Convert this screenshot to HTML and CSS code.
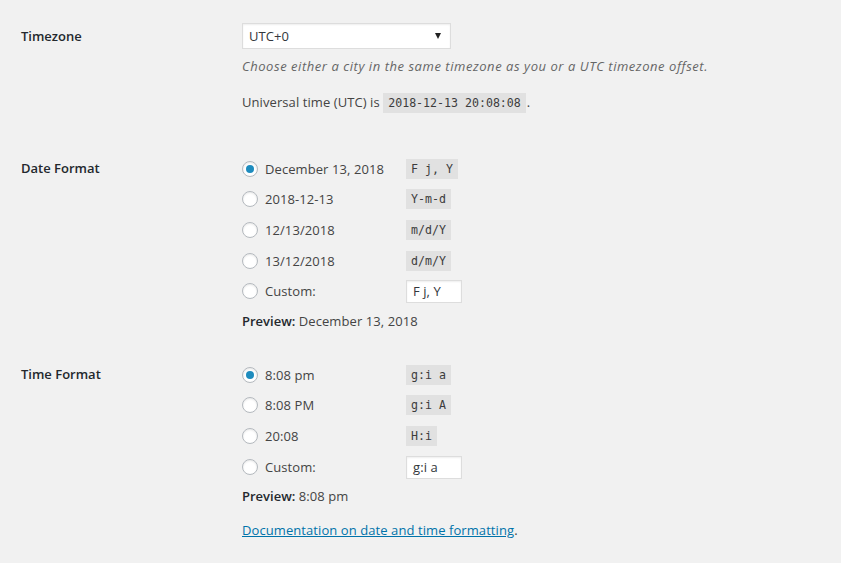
FILE: index.html
```html
<!DOCTYPE html>
<html>
<head>
<meta charset="utf-8">
<link rel="stylesheet" href="styles.css">
</head>
<body>
<div class="form">
  <div class="row row-tz">
    <div class="th th-tz">Timezone</div>
    <div class="td">
      <div class="select"><span>UTC+0</span><span class="arrow"></span></div>
      <p class="description">Choose either a city in the same timezone as you or a UTC timezone offset.</p>
      <p class="utc">Universal time (UTC) is <code>2018-12-13 20:08:08</code>.</p>
    </div>
  </div>

  <div class="row row-date">
    <div class="th th-opt">Date Format</div>
    <div class="td">
      <div class="opt"><span class="radio checked"></span><span class="otext">December 13, 2018</span><code>F j, Y</code></div>
      <div class="opt"><span class="radio"></span><span class="otext">2018-12-13</span><code>Y-m-d</code></div>
      <div class="opt"><span class="radio"></span><span class="otext">12/13/2018</span><code>m/d/Y</code></div>
      <div class="opt"><span class="radio"></span><span class="otext">13/12/2018</span><code>d/m/Y</code></div>
      <div class="opt"><span class="radio"></span><span class="otext">Custom:</span><span class="input">F j, Y</span></div>
      <p class="preview"><strong>Preview:</strong> December 13, 2018</p>
    </div>
  </div>

  <div class="row row-time">
    <div class="th th-opt th-time">Time Format</div>
    <div class="td">
      <div class="opt opt-t"><span class="radio checked"></span><span class="otext">8:08 pm</span><code>g:i a</code></div>
      <div class="opt opt-t"><span class="radio"></span><span class="otext">8:08 PM</span><code>g:i A</code></div>
      <div class="opt opt-t"><span class="radio"></span><span class="otext">20:08</span><code>H:i</code></div>
      <div class="opt opt-t"><span class="radio"></span><span class="otext">Custom:</span><span class="input">g:i a</span></div>
      <p class="preview preview-t"><strong>Preview:</strong> 8:08 pm</p>
      <p class="doc"><a href="#">Documentation on date and time formatting</a>.</p>
    </div>
  </div>
</div>
</body>
</html>
```

FILE: styles.css
```css
html, body {
  margin: 0;
  padding: 0;
  background: #f1f1f1;
}
body {
  font-family: "Open Sans", "Noto Sans", sans-serif;
  font-size: 13px;
  letter-spacing: 0.08px;
  color: #444;
  width: 841px;
  height: 563px;
  overflow: hidden;
}
.form {
  padding: 23px 0 0 21px;
}
.row {
  display: flex;
}
.th {
  width: 221px;
  flex: none;
  font-weight: 600;
  color: #23282d;
  line-height: 20px;
  letter-spacing: 0;
}
.th-tz {
  padding-top: 3px;
}
.th-opt {
  line-height: 31px;
}
.td {
  flex: 1;
}
p {
  margin: 0;
  line-height: 20px;
}
.select {
  height: 24px;
  border: 1px solid #ddd;
  background: #fff;
  box-shadow: inset 0 1px 2px rgba(0,0,0,.07);
  display: flex;
  align-items: center;
  justify-content: space-between;
  padding: 0 9px 0 6px;
  box-sizing: content-box;
  width: 192px;
  color: #32373c;
}
.arrow {
  width: 0;
  height: 0;
  border-left: 3px solid transparent;
  border-right: 3px solid transparent;
  border-top: 6px solid #222;
}
.description {
  margin-top: 7px;
  font-style: italic;
  color: #666;
  letter-spacing: 0.55px;
}
.utc {
  margin-top: 16px;
}
code {
  font-family: "DejaVu Sans Mono", "Liberation Mono", monospace;
  font-size: 11.6px;
  letter-spacing: 0;
  background: #e1e1e1;
  padding: 3px 5px 2px;
  color: #3c3c3c;
  line-height: 15px;
  display: inline-block;
}
.utc code {
  margin: 0 1px 0 0;
}
.row-date {
  margin-top: 40.2px;
}
.opt {
  height: 30.7px;
  display: flex;
  align-items: center;
}
.opt-t {
  height: 30.6px;
}
.radio {
  width: 14px;
  height: 14px;
  border: 1px solid #b4b9be;
  border-radius: 50%;
  background: #fff;
  box-shadow: inset 0 1px 2px rgba(0,0,0,.1);
  margin-right: 7px;
  flex: none;
  display: flex;
  align-items: center;
  justify-content: center;
}
.radio.checked::before {
  content: "";
  width: 8px;
  height: 8px;
  border-radius: 50%;
  background: #1e8cbe;
}
.otext {
  width: 141px;
  flex: none;
  white-space: nowrap;
}
.input {
  width: 48px;
  height: 21px;
  border: 1px solid #ddd;
  background: #fff;
  box-shadow: inset 0 1px 2px rgba(0,0,0,.07);
  padding: 0 0 0 6px;
  line-height: 21px;
  color: #32373c;
  margin-top: 1px;
}
.preview {
  margin-top: 4.5px;
}
.preview strong {
  font-weight: 600;
  color: #23282d;
  letter-spacing: 0;
}
.row-time {
  margin-top: 28.3px;
}
.preview-t {
  margin-top: 4.5px;
}
.doc {
  margin-top: 14px;
}
.doc a {
  color: #0073aa;
  text-decoration: underline;
}
```
